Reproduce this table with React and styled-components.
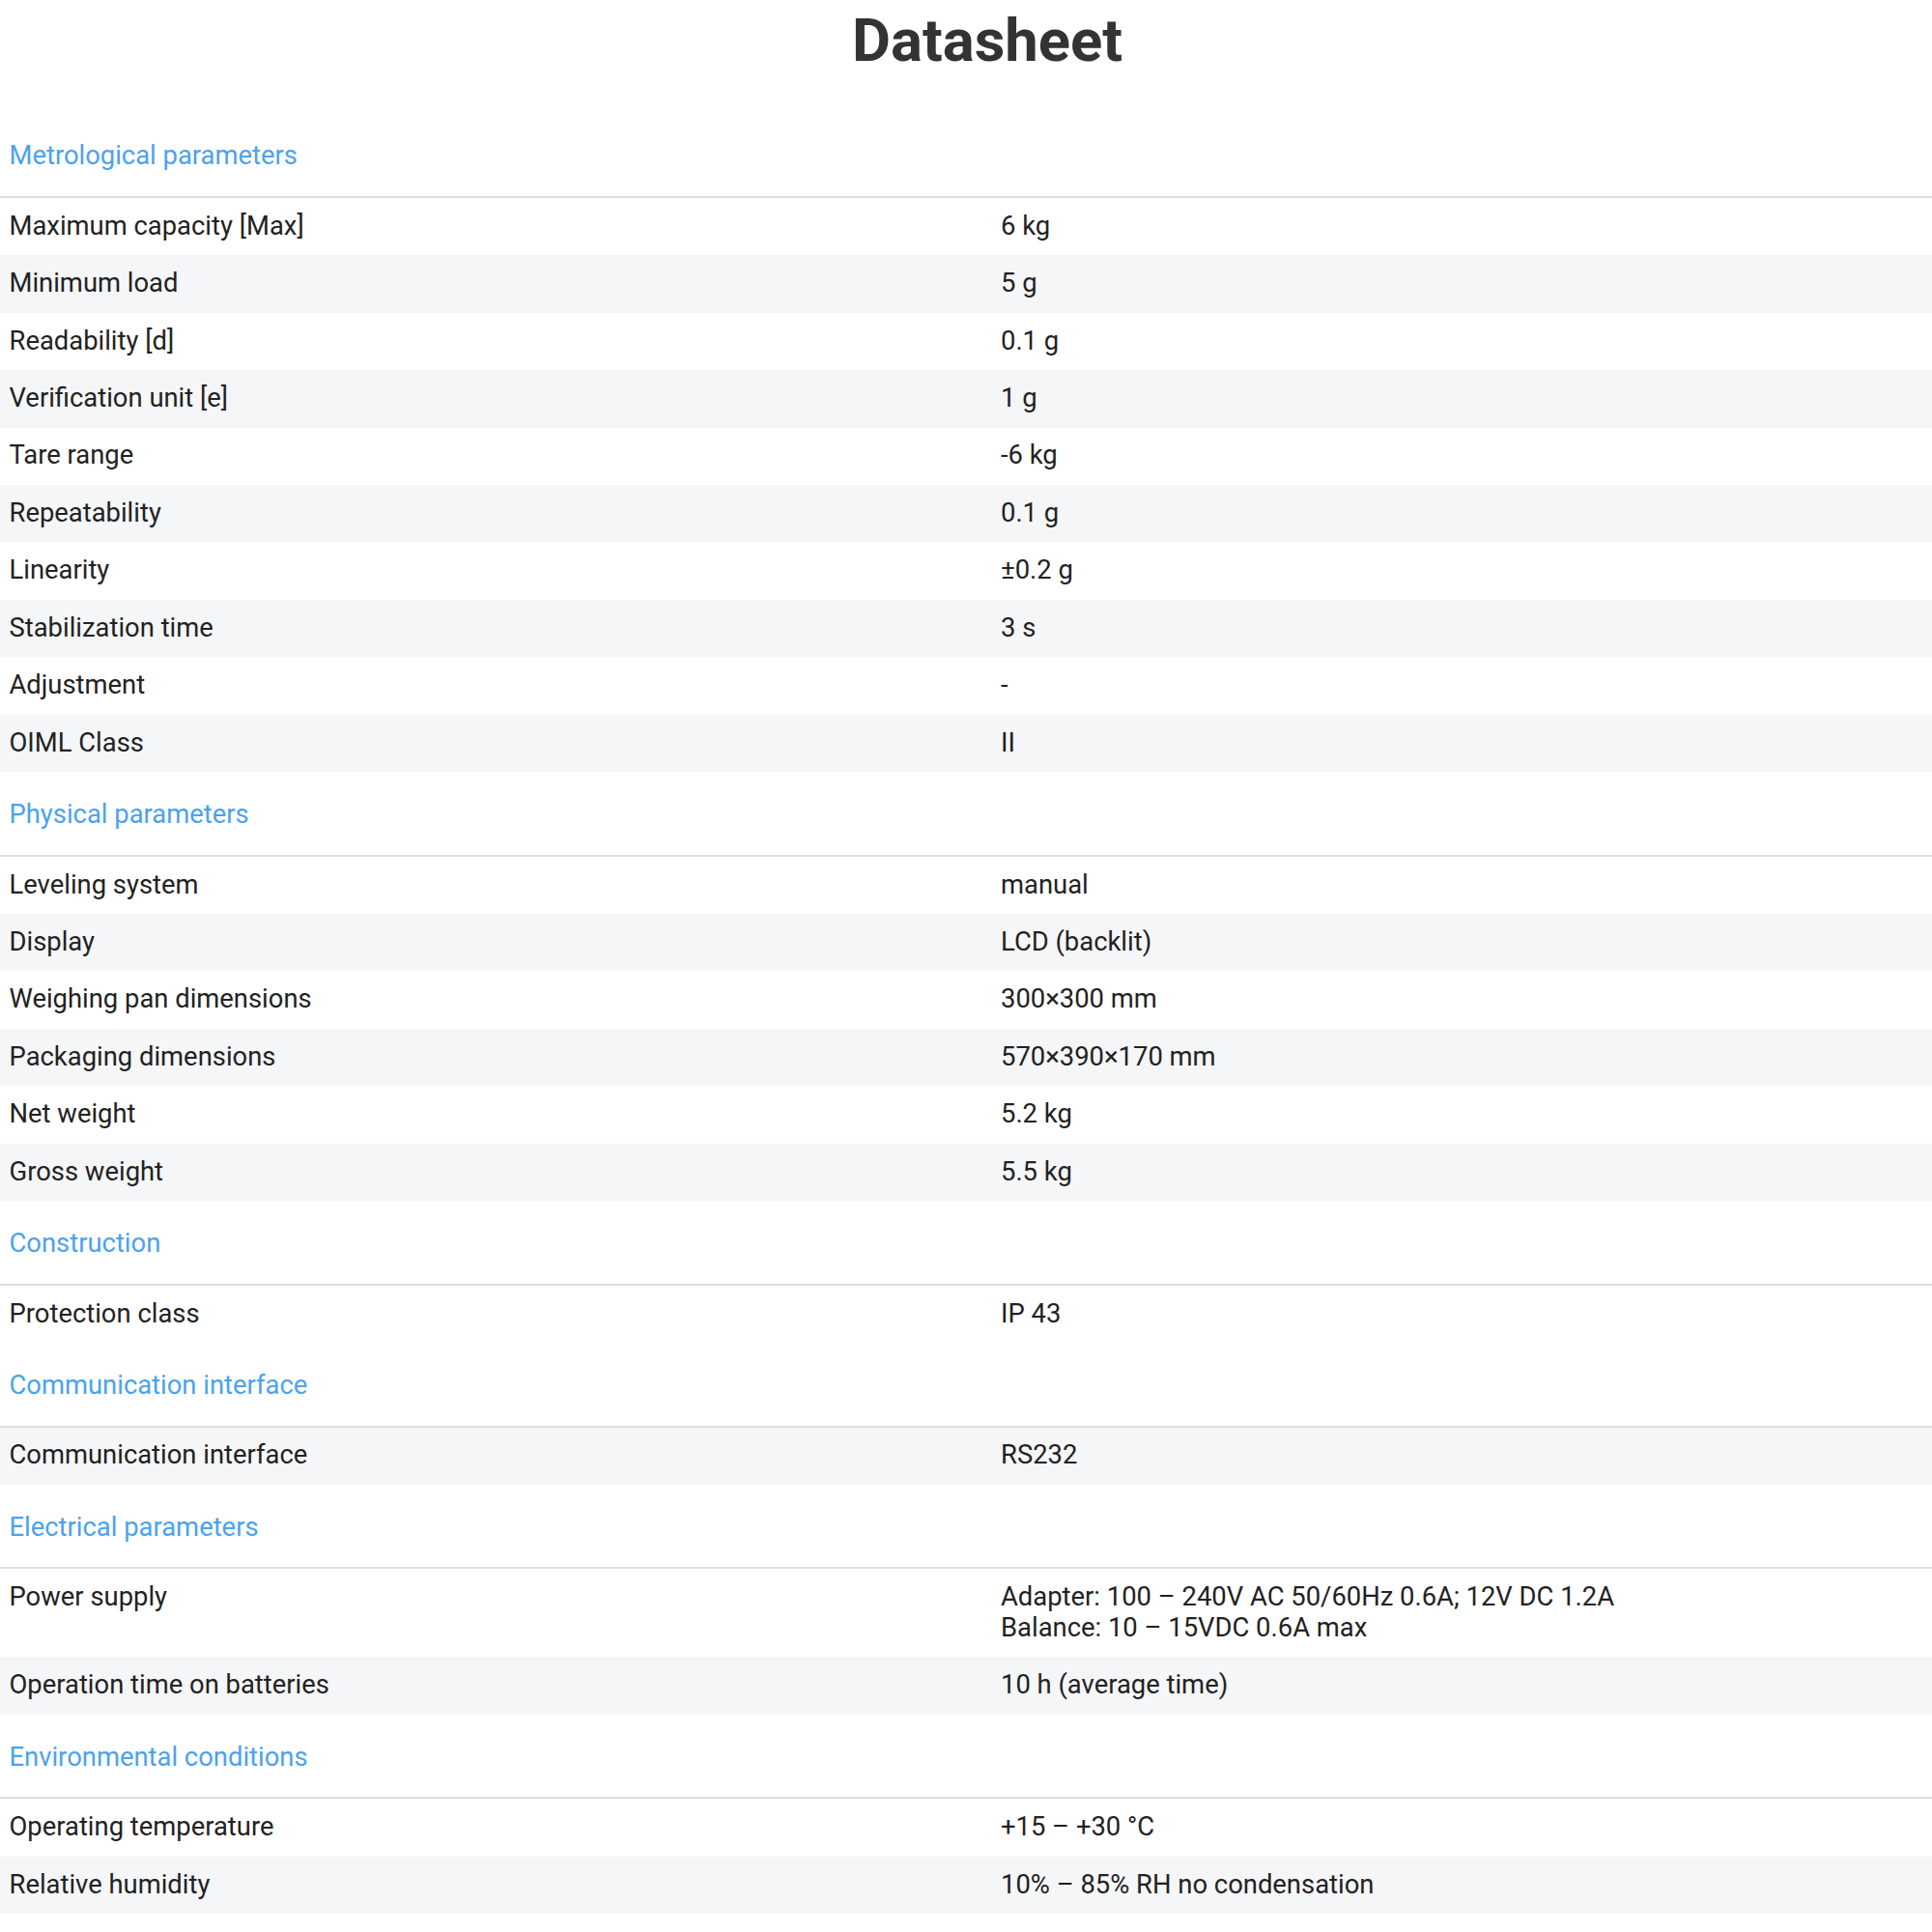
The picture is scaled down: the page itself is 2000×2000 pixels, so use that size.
import React from 'react';
import styled, { createGlobalStyle } from 'styled-components';

const GlobalStyle = createGlobalStyle`
  html, body {
    margin: 0;
    padding: 0;
    overflow: hidden;
    background: #ffffff;
  }
  body {
    font-family: Roboto, "Liberation Sans", Arial, sans-serif;
  }
`;

const Page = styled.div`
  width: 2048px;
  padding-top: 5.5px;
  color: #222222;
  font-size: 27.4px;
  line-height: 1.15;
`;

const Title = styled.h2`
  margin: 0 0 38px;
  padding-right: 4px;
  text-align: center;
  font-size: 61.5px;
  line-height: 1.2;
  font-weight: 700;
  color: #333333;
`;

const Section = styled.section`
  display: flex;
  flex-direction: column;
`;

const SectionHeader = styled.div`
  padding: 29px 9.5px 25px;
  border-bottom: 2px solid #dedede;
  color: #4ba2ee;
  font-weight: 400;
`;

const Row = styled.div`
  display: grid;
  grid-template-columns: 1026.5px 1fr;
  background: ${p => (p.$shade ? '#f5f6f8' : '#ffffff')};
`;

const Cell = styled.div`
  padding: 13.96px 9.5px;
  white-space: pre-line;
`;

const sections = [
  {
    title: 'Metrological parameters',
    rows: [
      ['Maximum capacity [Max]', '6 kg'],
      ['Minimum load', '5 g'],
      ['Readability [d]', '0.1 g'],
      ['Verification unit [e]', '1 g'],
      ['Tare range', '-6 kg'],
      ['Repeatability', '0.1 g'],
      ['Linearity', '±0.2 g'],
      ['Stabilization time', '3 s'],
      ['Adjustment', '-'],
      ['OIML Class', 'II'],
    ],
  },
  {
    title: 'Physical parameters',
    rows: [
      ['Leveling system', 'manual'],
      ['Display', 'LCD (backlit)'],
      ['Weighing pan dimensions', '300×300 mm'],
      ['Packaging dimensions', '570×390×170 mm'],
      ['Net weight', '5.2 kg'],
      ['Gross weight', '5.5 kg'],
    ],
  },
  {
    title: 'Construction',
    rows: [['Protection class', 'IP 43']],
  },
  {
    title: 'Communication interface',
    shift: true,
    rows: [['Communication interface', 'RS232']],
  },
  {
    title: 'Electrical parameters',
    rows: [
      ['Power supply', 'Adapter: 100 – 240V AC 50/60Hz 0.6A; 12V DC 1.2A\nBalance: 10 – 15VDC 0.6A max'],
      ['Operation time on batteries', '10 h (average time)'],
    ],
  },
  {
    title: 'Environmental conditions',
    rows: [
      ['Operating temperature', '+15 – +30 °C'],
      ['Relative humidity', '10% – 85% RH no condensation'],
    ],
  },
];

export default function App() {
  return (
    <>
      <GlobalStyle />
      <Page>
        <Title>Datasheet</Title>
        {sections.map(section => (
          <Section key={section.title}>
            <SectionHeader>{section.title}</SectionHeader>
            {section.rows.map(([label, value], i) => (
              <Row key={label} $shade={section.shift ? i % 2 === 0 : i % 2 === 1}>
                <Cell>{label}</Cell>
                <Cell>{value}</Cell>
              </Row>
            ))}
          </Section>
        ))}
      </Page>
    </>
  );
}
